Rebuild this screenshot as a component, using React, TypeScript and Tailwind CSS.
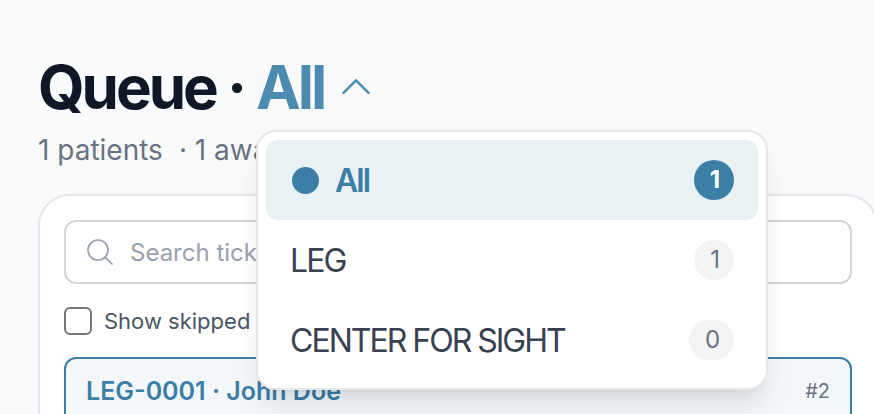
import React, { useState } from 'react'

type Location = { name: string; count: number }

const LOCATIONS: Location[] = [
  { name: 'All', count: 1 },
  { name: 'LEG', count: 1 },
  { name: 'CENTER FOR SIGHT', count: 0 },
]

const ChevronUp = ({ flipped }: { flipped: boolean }) => (
  <svg className={`size-10 ${flipped ? 'rotate-180' : ''}`} viewBox="0 0 24 24" fill="none" stroke="currentColor" strokeWidth={1.5} strokeLinecap="round" strokeLinejoin="round" aria-hidden="true">
    <path d="m4.5 15.5 7.5-7.5 7.5 7.5" />
  </svg>
)

const SearchIcon = () => (
  <svg className="size-8 shrink-0 text-gray-400" viewBox="0 0 24 24" fill="none" stroke="currentColor" strokeWidth={1.3} strokeLinecap="round" strokeLinejoin="round" aria-hidden="true">
    <path d="m21 21-5.197-5.197m0 0A7.5 7.5 0 1 0 5.196 5.196a7.5 7.5 0 0 0 10.607 10.607Z" />
  </svg>
)

const LocationMenu = ({ selected, onSelect }: { selected: string; onSelect: (name: string) => void }) => (
  <div className="absolute left-0 top-[79px] z-10 w-128 rounded-[20px] border-2 border-gray-200 bg-white p-2 tracking-[-2px] shadow-[0_20px_30px_-6px_rgba(0,0,0,0.1),0_8px_12px_-8px_rgba(0,0,0,0.1)]">
    {LOCATIONS.map(({ name, count }) => {
      const active = name === selected
      return (
        <button
          key={name}
          onClick={() => onSelect(name)}
          className={`flex h-20 w-full items-center justify-between rounded-xl px-6 text-[32px] leading-10 ${active ? 'bg-[#e9f1f5] font-semibold text-[#3b7ea6]' : 'font-normal text-[#374151]'}`}
        >
          <span className="flex items-center gap-4">
            {active && <span className="ml-0.5 size-[27px] rounded-full bg-[#3b7ea6]" />}
            <span className="pt-0.5">{name}</span>
          </span>
          <span className={`rounded-full px-4 py-1 text-2xl leading-8 ${active ? 'bg-[#3b7ea6] font-bold text-white' : 'bg-gray-100 text-gray-500'}`}>{count}</span>
        </button>
      )
    })}
  </div>
)

export default function App() {
  const [open, setOpen] = useState(true)
  const [selected, setSelected] = useState('All')

  const handleSelect = (name: string) => {
    setSelected(name)
    setOpen(false)
  }

  return (
    <main className="min-h-screen overflow-hidden bg-[#f9fafc] pl-[38px] pt-[51px] font-['Inter',sans-serif]">
      <div className="flex gap-3 text-[60px] font-bold leading-[72px] tracking-tighter text-gray-900">
        <h1>Queue ·</h1>
        <div className="relative">
          <button className="flex items-center gap-3 text-[#4d8bb0]" aria-expanded={open} onClick={() => setOpen(!open)}>
            {selected}
            <ChevronUp flipped={!open} />
          </button>
          {open && <LocationMenu selected={selected} onSelect={handleSelect} />}
        </div>
      </div>

      <p className="mt-[7px] flex gap-4 text-[28px] leading-10 text-gray-500">
        <span>1 patients</span>
        <span>· 1 awaiting</span>
      </p>

      <section className="-mr-1 mt-6 rounded-[32px] border-2 border-gray-200 bg-white p-6 pb-12">
        <label className="flex h-16 items-center gap-3.5 rounded-xl border-2 border-gray-300 px-[18px]">
          <SearchIcon />
          <input type="text" aria-label="Search tickets" placeholder="Search tickets" className="w-full pt-0.5 text-2xl text-gray-700 outline-none placeholder:text-gray-400" />
        </label>

        <label className="mt-[21px] flex h-8 items-center gap-3 text-[22px] leading-8 text-gray-600">
          <input type="checkbox" className="size-7 appearance-none rounded-md border-2 border-[#767676] bg-white checked:bg-[#3b7ea6]" />
          Show skipped
        </label>

        <div className="mt-5 h-40 rounded-xl border-2 border-[#3b7ea6] bg-[#f3f7fa] px-5 py-3.5">
          <div className="flex items-center justify-between leading-9">
            <span className="text-[25px] leading-9 font-semibold text-[#3b7ea6]">LEG-0001 · John Doe</span>
            <span className="text-xl leading-9 text-gray-500">#2</span>
          </div>
        </div>
      </section>
    </main>
  )
}
